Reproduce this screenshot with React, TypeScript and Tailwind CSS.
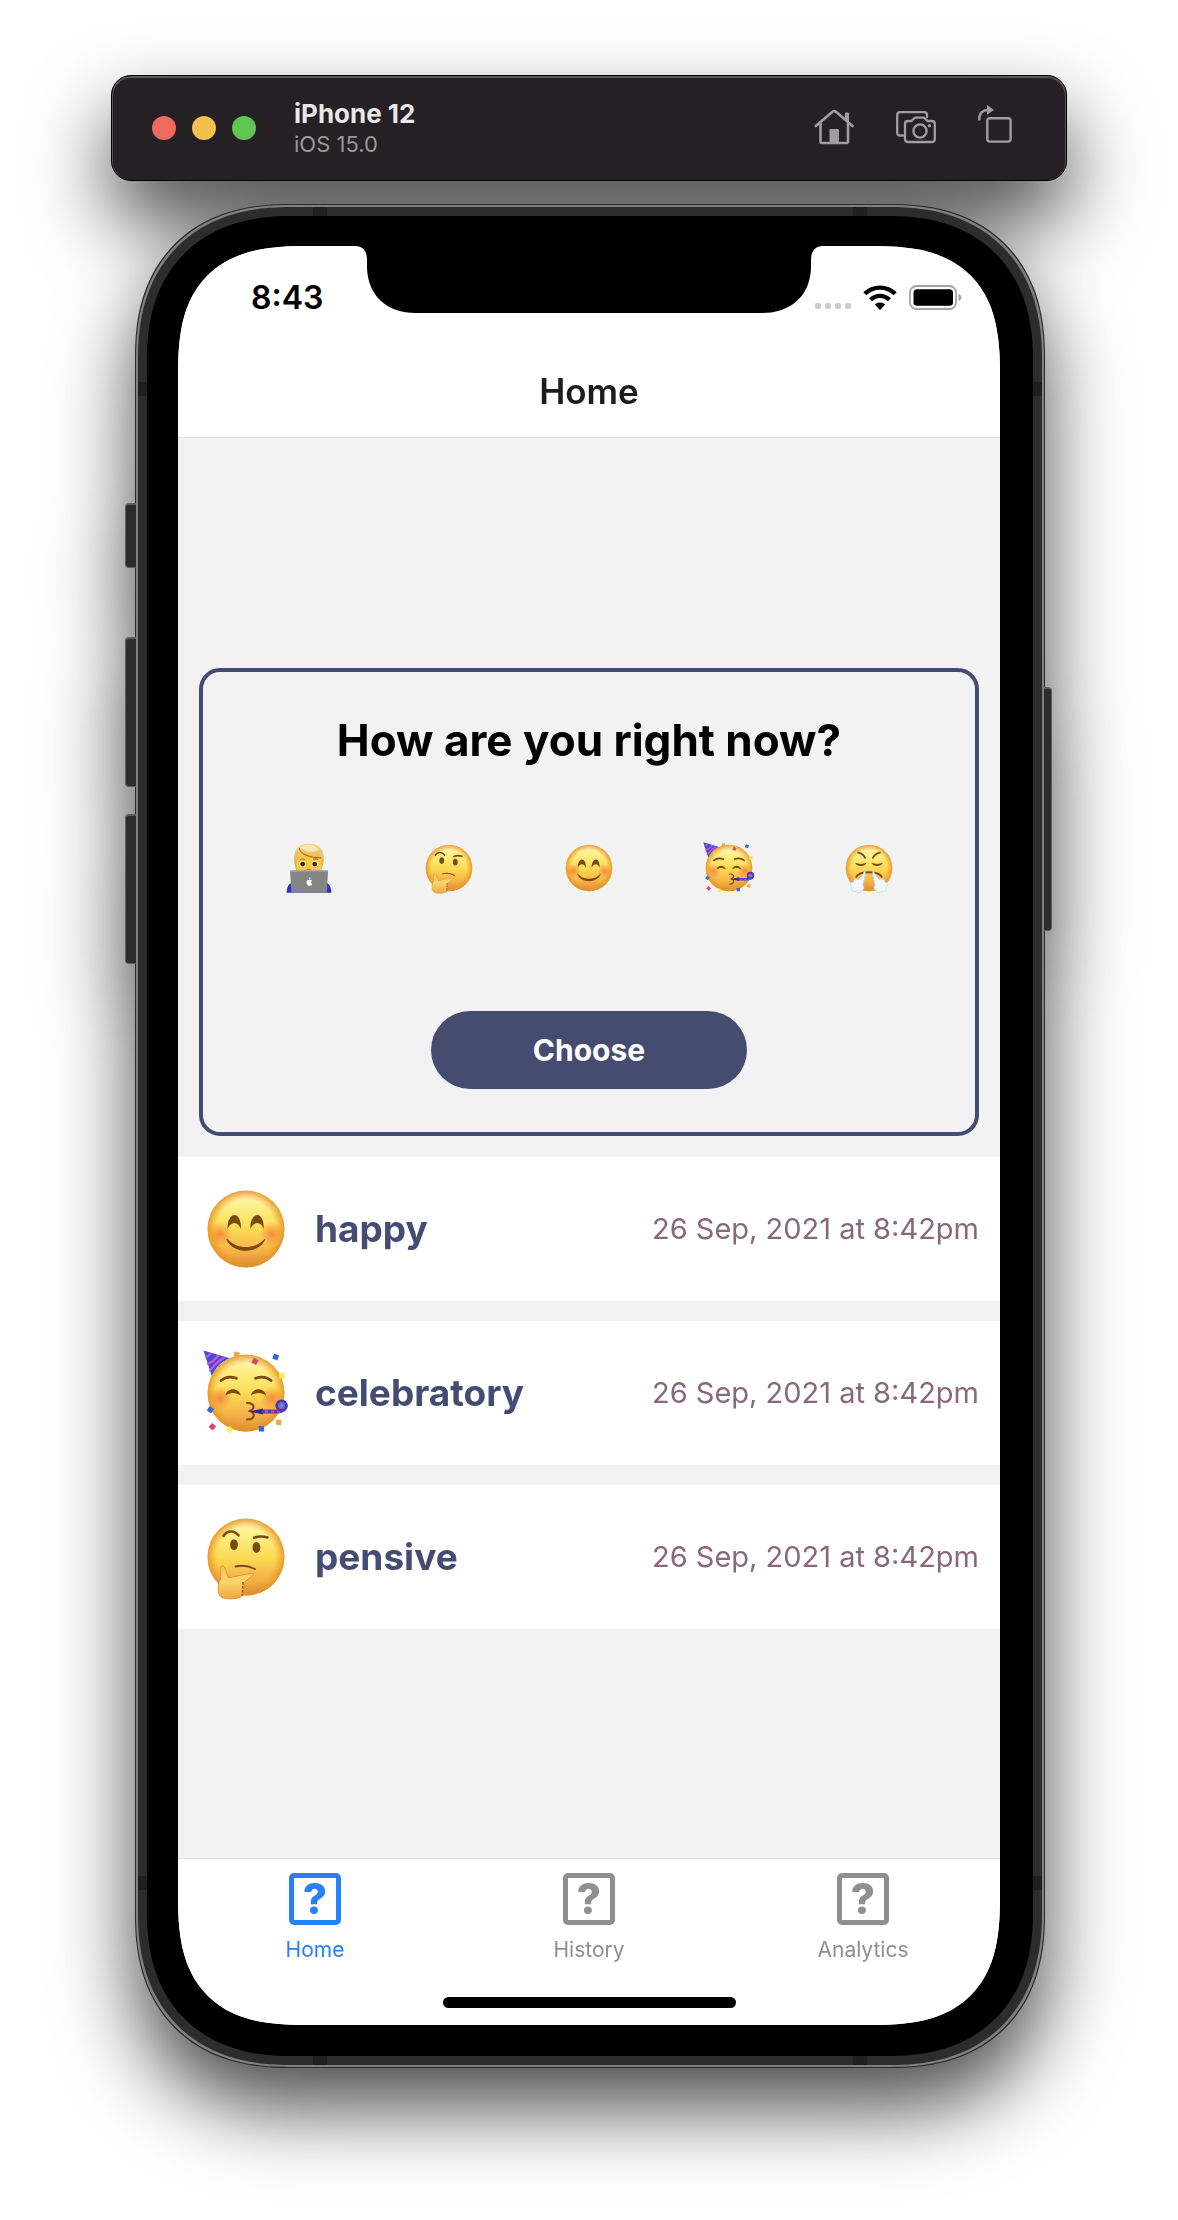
import React from 'react';

type Mood = 'technologist' | 'pensive' | 'happy' | 'celebratory' | 'angry';

function FaceGradients({ id }: { id: string }) {
  return (
    <defs>
      <linearGradient id={`${id}-skin`} x1="0" y1="0" x2="0" y2="1">
        <stop offset="0" stopColor="#fffbd2" />
        <stop offset="0.2" stopColor="#fef08a" />
        <stop offset="0.5" stopColor="#fcdb55" />
        <stop offset="0.8" stopColor="#f4b046" />
        <stop offset="1" stopColor="#d98a38" />
      </linearGradient>
      <radialGradient id={`${id}-rim`} cx="0.5" cy="0.5" r="0.5">
        <stop offset="0.75" stopColor="#f0a02c" stopOpacity="0" />
        <stop offset="1" stopColor="#e39228" stopOpacity="0.9" />
      </radialGradient>
      <radialGradient id={`${id}-cheek`}>
        <stop offset="0" stopColor="#f47a34" stopOpacity="0.8" />
        <stop offset="1" stopColor="#f47a34" stopOpacity="0" />
      </radialGradient>
      <linearGradient id={`${id}-hair`} x1="0" y1="0" x2="0" y2="1">
        <stop offset="0" stopColor="#f7d58d" />
        <stop offset="1" stopColor="#e0a62e" />
      </linearGradient>
      <linearGradient id={`${id}-hand`} x1="0" y1="0" x2="0" y2="1">
        <stop offset="0" stopColor="#f9c75c" />
        <stop offset="0.5" stopColor="#fbd46c" />
        <stop offset="1" stopColor="#f0a63c" />
      </linearGradient>
    </defs>
  );
}

function Head({ id, cheeks }: { id: string; cheeks?: boolean }) {
  return (
    <>
      <circle cx="42" cy="42" r="38.5" fill={`url(#${id}-skin)`} />
      <circle cx="42" cy="42" r="38.5" fill={`url(#${id}-rim)`} />
      {cheeks && (
        <>
          <circle cx="16" cy="47" r="12" fill={`url(#${id}-cheek)`} />
          <circle cx="68" cy="47" r="12" fill={`url(#${id}-cheek)`} />
        </>
      )}
    </>
  );
}

const brown = '#7a4a12';

const confetti: [number, number, string, number][] = [
  [32.7, 3.7, '#efa552', 10],
  [51, 10.4, '#d84a63', 30],
  [71.7, 6, '#3567cf', 20],
  [78, 24.7, '#fbea5c', 0],
  [6.4, 58.7, '#3567cf', 35],
  [8.4, 75.7, '#d84a63', 40],
  [25.7, 78.7, '#fbea5c', 35],
  [57.4, 77.8, '#3567cf', 0],
  [74.7, 71.4, '#efa552', 10],
];

function Emoji({ mood, id, className }: { mood: Mood; id: string; className: string }) {
  return (
    <svg viewBox="-1 -1 86 86" className={className} role="img" aria-label={mood}>
      <FaceGradients id={id} />
      {mood === 'happy' && (
        <>
          <Head id={id} cheeks />
          <g fill={brown}>
            <path d="M23.5 42C23.5 33 26.8 28 30.4 28S37.3 33 37 42C35.5 38 33 36 30.4 36S25.3 38 23.5 42Z" />
            <path d="M46.3 42C46.3 33 49.6 28 53.2 28S60.1 33 59.8 42C58.3 38 55.8 36 53.2 36S48.1 38 46.3 42Z" />
            <path d="M22.4 52.4C22.4 51.6 23.4 51.7 24 52.4C33 62.5 51 62.5 60 52.4C60.6 51.7 61.4 51.7 61.2 52.6C55 67.5 29 67.5 22.4 52.4Z" />
          </g>
        </>
      )}
      {mood === 'celebratory' && (
        <>
          <Head id={id} cheeks />
          <path d="M-0.5 -0.5L25.7 7.3C18 10 12 16 7.7 24.7Z" fill="#3450dc" />
          <g stroke="#e04fc8" strokeWidth="2.2" fill="none">
            <path d="M1 6C4 5.5 6 3.5 7 1.8" />
            <path d="M3 13C8 11.5 12 8 14.5 4.2" />
            <path d="M5.5 20.5C9 15 14 10.5 20.5 6.2" />
          </g>
          <g stroke={brown} strokeWidth="2.8" strokeLinecap="round" fill="none">
            <path d="M17 29.5C21 26 27 25.3 32.5 27.3" />
            <path d="M51.5 27.3C57 25.3 63 26 67 29.5" />
            <path d="M43 52C49 51.5 52.5 56.5 46 60C52.5 62.5 50 69 43 68.5" strokeWidth="2" />
          </g>
          <g fill={brown}>
            <path d="M21.4 44.5C23 36 35 36 36.8 44.5C32 41 26 41 21.4 44.5Z" />
            <path d="M46.8 44.5C48.5 36 60.5 36 62.2 44.5C57.5 41 51.5 41 46.8 44.5Z" />
          </g>
          <path d="M45 60.5L59 57.5V63.5Z" fill="#35258f" />
          <path d="M58 60.5H73C80 60 82 57 81.5 53" stroke="#4b3ec4" strokeWidth="4.2" fill="none" />
          <path d="M61 60.5H76" stroke="#d13fae" strokeWidth="2.6" strokeDasharray="3 3" fill="none" />
          <circle cx="77.5" cy="54.5" r="4.8" fill="#8d63b8" stroke="#4338b8" strokeWidth="2.6" />
          <circle cx="77.5" cy="54.5" r="1.7" fill="#3fa0dd" />
          {confetti.map(([x, y, fill, turn]) => (
            <rect
              key={`${x}-${y}`}
              x={x - 2.7}
              y={y - 2.7}
              width="5.4"
              height="5.4"
              fill={fill}
              transform={`rotate(${turn} ${x} ${y})`}
            />
          ))}
        </>
      )}
      {mood === 'pensive' && (
        <>
          <Head id={id} />
          <g stroke={brown} strokeWidth="2.6" strokeLinecap="round" fill="none">
            <path d="M19.5 21C23 15 30.5 15 34.5 20.5" />
            <path d="M50 22.8C55 21 59.5 21.3 63.5 22.5" />
            <path d="M31.5 51.5C38 50 45 51 51 54" strokeWidth="1.8" />
          </g>
          <ellipse cx="30" cy="29.7" rx="3.9" ry="5.5" fill={brown} />
          <ellipse cx="52.4" cy="32.4" rx="3.9" ry="5.5" fill={brown} />
          <path
            d="M18 50.5C15.5 52.5 17 59 16.5 64C13.5 69 14 74 14.5 78C16 83.5 22 84.2 28 83.8C34 83.5 38.5 82.5 39 78C40 76 39.5 74.5 38.7 73C40 71.5 39.5 70 38.5 69C40.5 66.5 45 64 48.5 60.8C51 58 48.5 57.8 46 58.5L30.5 61.5C28 62 26 62.8 24.5 62.5C22.5 59 22 52 18 50.5Z"
            fill={`url(#${id}-hand)`}
            stroke="#d08a2b"
            strokeWidth="0.8"
          />
          <path d="M39 67L38.3 81" stroke="#9a5c17" strokeWidth="1.5" strokeDasharray="2.5 1.5" fill="none" />
        </>
      )}
      {mood === 'angry' && (
        <>
          <Head id={id} />
          <g stroke={brown} strokeWidth="3" strokeLinecap="round" fill="none">
            <path d="M24 16.5C28 17 33 20.5 35.5 25" />
            <path d="M60 16.5C56 17 51 20.5 48.5 25" />
            <path d="M21 56.5C27 46.5 57 46.5 63 56.5" />
          </g>
          <g fill={brown}>
            <path d="M19 33.5C25 36 32 36 38 33.5C35 40.5 22 40.5 19 33.5Z" />
            <path d="M46 33.5C52 36 59 36 65 33.5C62 40.5 49 40.5 46 33.5Z" />
          </g>
          <g fill="#f3f8fe" stroke="#b9d4f0" strokeWidth="1.2">
            <path d="M35.5 45C33 53 28 57 25.5 61C20 58.5 16 61 16 65C11 65 10 71 13.5 74C12 79 17 83 21 80.5C24 84.5 30 83 30 79C35 77.5 34 72 31.5 70C34 62 36.5 53 35.5 45Z" />
            <path d="M48.5 45C51 53 56 57 58.5 61C64 58.5 68 61 68 65C73 65 74 71 70.5 74C72 79 67 83 63 80.5C60 84.5 54 83 54 79C49 77.5 50 72 52.5 70C50 62 47.5 53 48.5 45Z" />
          </g>
        </>
      )}
      {mood === 'technologist' && (
        <>
          <path d="M5 83C5 75 8 69 13 67H71C76 69 79 75 79 83Z" fill="#2438c4" />
          <path d="M18 34C14 12 26 1 42 1.3C60 1.3 69 13 66 34L62 46H21Z" fill={`url(#${id}-hair)`} />
          <path d="M22 28C26 25 27 21 28 17C36 24 50 27 61 26C65 36 62 46 60 50H24C21 42 20 36 22 28Z" fill="#fbc93e" />
          <path d="M26 9C27 19 44 25 62 25" stroke="#a8701a" strokeWidth="1.8" fill="none" />
          <path d="M28 8C34 1 52 2 58 12C50 17 36 16 28 8Z" fill="#fbe5b4" />
          <path d="M27 28.5C30 26.5 33 27 35 28M49 28C51 27 55 26.5 57 28.5" stroke="#a8701a" strokeWidth="1.8" fill="none" />
          <circle cx="31.4" cy="35.5" r="5" fill="#fff" />
          <circle cx="51.5" cy="35.5" r="5" fill="#fff" />
          <circle cx="31.4" cy="35.5" r="4" fill="#3b2412" />
          <circle cx="51.5" cy="35.5" r="4" fill="#3b2412" />
          <path d="M38.5 44.5H45" stroke="#c98225" strokeWidth="1.8" />
          <path d="M12.5 46H71.5C73 46 73.5 47 73.5 48L71.5 83H13L10.8 48C10.8 47 11.5 46 12.5 46Z" fill="#858585" />
          <path d="M11.5 47H73" stroke="#a9a9a9" strokeWidth="1.5" />
          <path d="M42.5 62C45 60.5 47 62 46.5 63.5C45 65 45.5 67 47 68C46 71.5 44 72 42.3 71C40 72 38 69 37.8 66C38 62.5 40 61 42.5 62ZM42 61C42 59 43 58 44.5 57.5C44.5 59.5 43.5 61 42 61Z" fill="#fff" />
        </>
      )}
    </svg>
  );
}

function HomeIcon() {
  return (
    <svg viewBox="0 0 40 36" className="h-9 w-10" fill="none" stroke="#a29c9f" strokeWidth="2.6" strokeLinecap="round" strokeLinejoin="round" aria-hidden="true">
      <path d="M1.8 17L18.5 2.7C19.700 1.7 20.800 1.7 22 2.700L38.500 17" />
      <path d="M6.500 14.500V32.200Q6.500 34 8.300 34H32.200Q34 34 34 32.200V14.500" />
      <path d="M32 4.500H34V12.500L32 10.700Z" fill="#a29c9f" strokeWidth="2" />
      <rect x="15.500" y="20" width="9.500" height="14.500" fill="#a29c9f" stroke="none" rx="0.500" />
    </svg>
  );
}

function ScreenshotIcon() {
  return (
    <svg viewBox="0 0 40 33" className="h-[33px] w-10" fill="none" stroke="#a29c9f" strokeWidth="2.3" strokeLinecap="round" strokeLinejoin="round" aria-hidden="true">
      <path d="M7 24.5H4.2Q1.2 24.5 1.2 21.5V4.2Q1.2 1.2 4.2 1.2H28Q31 1.2 31 4.2V6" />
      <path d="M12 10H15.5L18 7.5Q18.8 6.7 20 6.7H27Q28.2 6.7 29 7.5L31.5 10H35.8Q38.8 10 38.8 13V28Q38.8 31 35.8 31H12Q9 31 9 28V13Q9 10 12 10Z" />
      <circle cx="24" cy="20" r="6.6" />
      <circle cx="33.5" cy="14.8" r="1.7" fill="#a29c9f" stroke="none" />
    </svg>
  );
}

function RotateIcon() {
  return (
    <svg viewBox="0 0 34 38" className="h-[38px] w-[34px]" fill="none" stroke="#a29c9f" strokeWidth="2.4" aria-hidden="true">
      <rect x="9.3" y="13.3" width="23.3" height="23.3" rx="2.5" />
      <path d="M1.3 15.5V14C1.3 8 4.5 5 10 5" />
      <path d="M9 0L16 5L9 9.8Z" fill="#a29c9f" stroke="none" />
    </svg>
  );
}

function Notch() {
  return (
    <svg viewBox="0 0 468 67" className="absolute top-0 left-1/2 h-[67px] w-[468px] -translate-x-1/2" aria-hidden="true">
      <path d="M0 0C8 0 12 5 12 14V22C13 50 32 67 61 67H407C436 67 455 50 456 22V14C456 5 460 0 468 0Z" fill="#000" />
    </svg>
  );
}

function WifiIcon() {
  return (
    <svg viewBox="0 0 34 25" className="h-[25px] w-[34px]" fill="none" stroke="#000" strokeWidth="4.4" aria-hidden="true">
      <path d="M1.8 8.8C10 0.5 24 0.5 32.2 8.8" />
      <path d="M7.6 14.8C13 9.5 21 9.5 26.4 14.8" />
      <path d="M17 25L11.8 19.5C14.5 16.8 19.5 16.8 22.2 19.5Z" fill="#000" stroke="none" />
    </svg>
  );
}

function BatteryIcon() {
  return (
    <svg viewBox="0 0 53 25" className="h-[25px] w-[53px]" aria-hidden="true">
      <rect x="1" y="1" width="46" height="23" rx="6.5" fill="none" stroke="#a3a3a3" strokeWidth="1.8" />
      <rect x="4.5" y="4.2" width="39.5" height="16.6" rx="3.5" fill="#000" />
      <path d="M49.5 9C53.3 10 53.3 15 49.5 16Z" fill="#a3a3a3" />
    </svg>
  );
}

const moods: Mood[] = ['technologist', 'pensive', 'happy', 'celebratory', 'angry'];

const entries: { mood: Mood; when: string }[] = [
  { mood: 'happy', when: '26 Sep, 2021 at 8:42pm' },
  { mood: 'celebratory', when: '26 Sep, 2021 at 8:42pm' },
  { mood: 'pensive', when: '26 Sep, 2021 at 8:42pm' },
];

const tabs = ['Home', 'History', 'Analytics'];

function Toolbar() {
  return (
    <header className="flex h-[106px] w-full max-w-[956px] items-center rounded-[20px] border border-black bg-[#252024] pr-[54px] pl-10 shadow-[inset_0_1px_0_1px_#5c595b]">
      <div className="flex gap-4">
        <button type="button" aria-label="Close" className="size-6 rounded-full bg-[#ee695e]" />
        <button type="button" aria-label="Minimize" className="size-6 rounded-full bg-[#f5bf4f]" />
        <button type="button" aria-label="Zoom" className="size-6 rounded-full bg-[#61c554]" />
      </div>
      <div className="ml-[38px]">
        <p className="text-[26px] leading-8 font-bold text-[#e9e7e8]">iPhone 12</p>
        <p className="text-[22px] leading-7 text-[#9c979a]">iOS 15.0</p>
      </div>
      <div className="ml-auto flex items-center gap-[42px] pb-0.5">
        <button type="button" aria-label="Home">
          <HomeIcon />
        </button>
        <button type="button" aria-label="Save screenshot">
          <ScreenshotIcon />
        </button>
        <button type="button" aria-label="Rotate" className="pb-1.5">
          <RotateIcon />
        </button>
      </div>
    </header>
  );
}

function SideButtons() {
  const left = 'absolute -left-[22px] w-[11px] rounded-l-sm border-y border-t-2 border-l border-[#5e5e5e] bg-[#2c2c2c]';
  return (
    <div aria-hidden="true">
      <span className={`${left} top-[287px] h-[65px]`} />
      <span className={`${left} top-[421px] h-[150px]`} />
      <span className={`${left} top-[598px] h-[150px]`} />
      <span className="absolute top-[471px] -right-[19px] h-[244px] w-2 rounded-r-sm border-y border-t-2 border-r border-[#5e5e5e] bg-[#2c2c2c]" />
    </div>
  );
}

function AntennaBands() {
  return (
    <div aria-hidden="true">
      <span className="absolute -top-[9px] left-[166px] h-[9px] w-3.5 bg-[#1f1f1f]" />
      <span className="absolute -top-[9px] right-[166px] h-[9px] w-3.5 bg-[#1f1f1f]" />
      <span className="absolute -bottom-[9px] left-[166px] h-[9px] w-3.5 bg-[#1f1f1f]" />
      <span className="absolute right-[166px] -bottom-[9px] h-[9px] w-3.5 bg-[#1f1f1f]" />
      <span className="absolute top-[166px] -left-[9px] h-3.5 w-[9px] bg-[#1f1f1f]" />
      <span className="absolute top-[166px] -right-[9px] h-3.5 w-[9px] bg-[#1f1f1f]" />
      <span className="absolute bottom-[166px] -left-[9px] h-3.5 w-[9px] bg-[#1f1f1f]" />
      <span className="absolute -right-[9px] bottom-[166px] h-3.5 w-[9px] bg-[#1f1f1f]" />
    </div>
  );
}

function StatusBar() {
  return (
    <div className="relative flex h-[99px] items-center justify-between bg-white pt-1 pr-[38px] pl-[73px]">
      <Notch />
      <time className="text-[32px] leading-10 font-semibold text-black">8:43</time>
      <div className="flex items-center">
        <div className="flex gap-1 pt-4" aria-hidden="true">
          <span className="size-1.5 rounded-[2px] bg-[#cccccc]" />
          <span className="size-1.5 rounded-[2px] bg-[#cccccc]" />
          <span className="size-1.5 rounded-[2px] bg-[#cccccc]" />
          <span className="size-1.5 rounded-[2px] bg-[#cccccc]" />
        </div>
        <span className="ml-3">
          <WifiIcon />
        </span>
        <span className="ml-3">
          <BatteryIcon />
        </span>
      </div>
    </div>
  );
}

function MoodPicker() {
  return (
    <section className="mx-[21px] flex flex-col items-center rounded-[21px] border-4 border-[#454c73] px-[36px] pt-[42px] pb-[43px]">
      <h2 className="text-center text-[44px] leading-[52px] font-bold text-black">How are you right now?</h2>
      <div className="mt-16 grid w-full grid-cols-5">
        {moods.map((mood) => (
          <button key={mood} type="button" className="flex items-center justify-center py-3">
            <Emoji mood={mood} id={`pick-${mood}`} className="size-[52px]" />
          </button>
        ))}
      </div>
      <button type="button" className="mt-[105px] h-[78px] w-[316px] rounded-[42px] bg-[#454c6f] text-[30px] leading-9 font-bold text-white">
        Choose
      </button>
    </section>
  );
}

function MoodList() {
  return (
    <ul className="mt-[21px] flex flex-col gap-5">
      {entries.map(({ mood, when }) => (
        <li key={mood} className="flex h-36 items-center bg-white px-[21px]">
          <span className="flex w-[94px] justify-center">
            <Emoji mood={mood} id={`row-${mood}`} className="size-[86px]" />
          </span>
          <span className="ml-[22px] text-[37px] leading-[46px] font-bold text-[#454c73]">{mood}</span>
          <time className="ml-auto text-[29px] leading-9 text-[#87697a]">{when}</time>
        </li>
      ))}
    </ul>
  );
}

function TabBar() {
  return (
    <footer className="flex h-[167px] flex-col items-center border-t border-[#dedede] bg-white pb-[17px]">
      <nav className="grid w-full grid-cols-3 pt-3.5">
        {tabs.map((tab, i) => (
          <a
            key={tab}
            href={`#${tab.toLowerCase()}`}
            className={
              i === 0
                ? 'flex flex-col items-center gap-3 text-[#2680f8]'
                : 'flex flex-col items-center gap-3 text-[#8f8f8f]'
            }
          >
            <span className="flex size-[52px] items-center justify-center rounded-[5px] border-5 border-current text-[42px] leading-none font-extrabold" aria-hidden="true">
              ?
            </span>
            <span className="text-[21px] leading-[26px]">{tab}</span>
          </a>
        ))}
      </nav>
      <div className="mt-auto h-[11px] w-[293px] rounded-full bg-black" aria-hidden="true" />
    </footer>
  );
}

export default function App() {
  return (
    <div className="flex min-h-[2220px] flex-col items-center overflow-hidden bg-white px-4 pt-[75px] pb-[152px] font-[Inter,'Liberation_Sans',sans-serif]">
      <div className="flex w-full flex-col items-center drop-shadow-[0_40px_40px_rgba(0,0,0,0.7)]">
        <Toolbar />
        <div className="relative mt-[26px] ml-0.5 w-full max-w-[904px] rounded-[138px] border-9 border-[#2c2c2c] bg-black pt-[30px] pr-[33px] pb-[31px] pl-[31px] shadow-[0_0_0_2px_#808080,0_0_0_3px_#2a2a2a] supports-[corner-shape:squircle]:rounded-[152px] supports-[corner-shape:squircle]:[corner-shape:superellipse(1.2)]">
          <SideButtons />
          <AntennaBands />
          <div className="flex min-h-[1779px] flex-col overflow-hidden rounded-[106px] bg-[#f2f2f2] supports-[corner-shape:squircle]:rounded-[130px] supports-[corner-shape:squircle]:[corner-shape:superellipse(1.43)]">
            <StatusBar />
            <h1 className="flex h-[93px] items-center justify-center border-b border-[#dedede] bg-white text-[35px] leading-[44px] font-semibold text-[#1c1c1e]">
              Home
            </h1>
            <main className="flex flex-1 flex-col justify-center">
              <MoodPicker />
              <MoodList />
            </main>
            <TabBar />
          </div>
        </div>
      </div>
    </div>
  );
}
